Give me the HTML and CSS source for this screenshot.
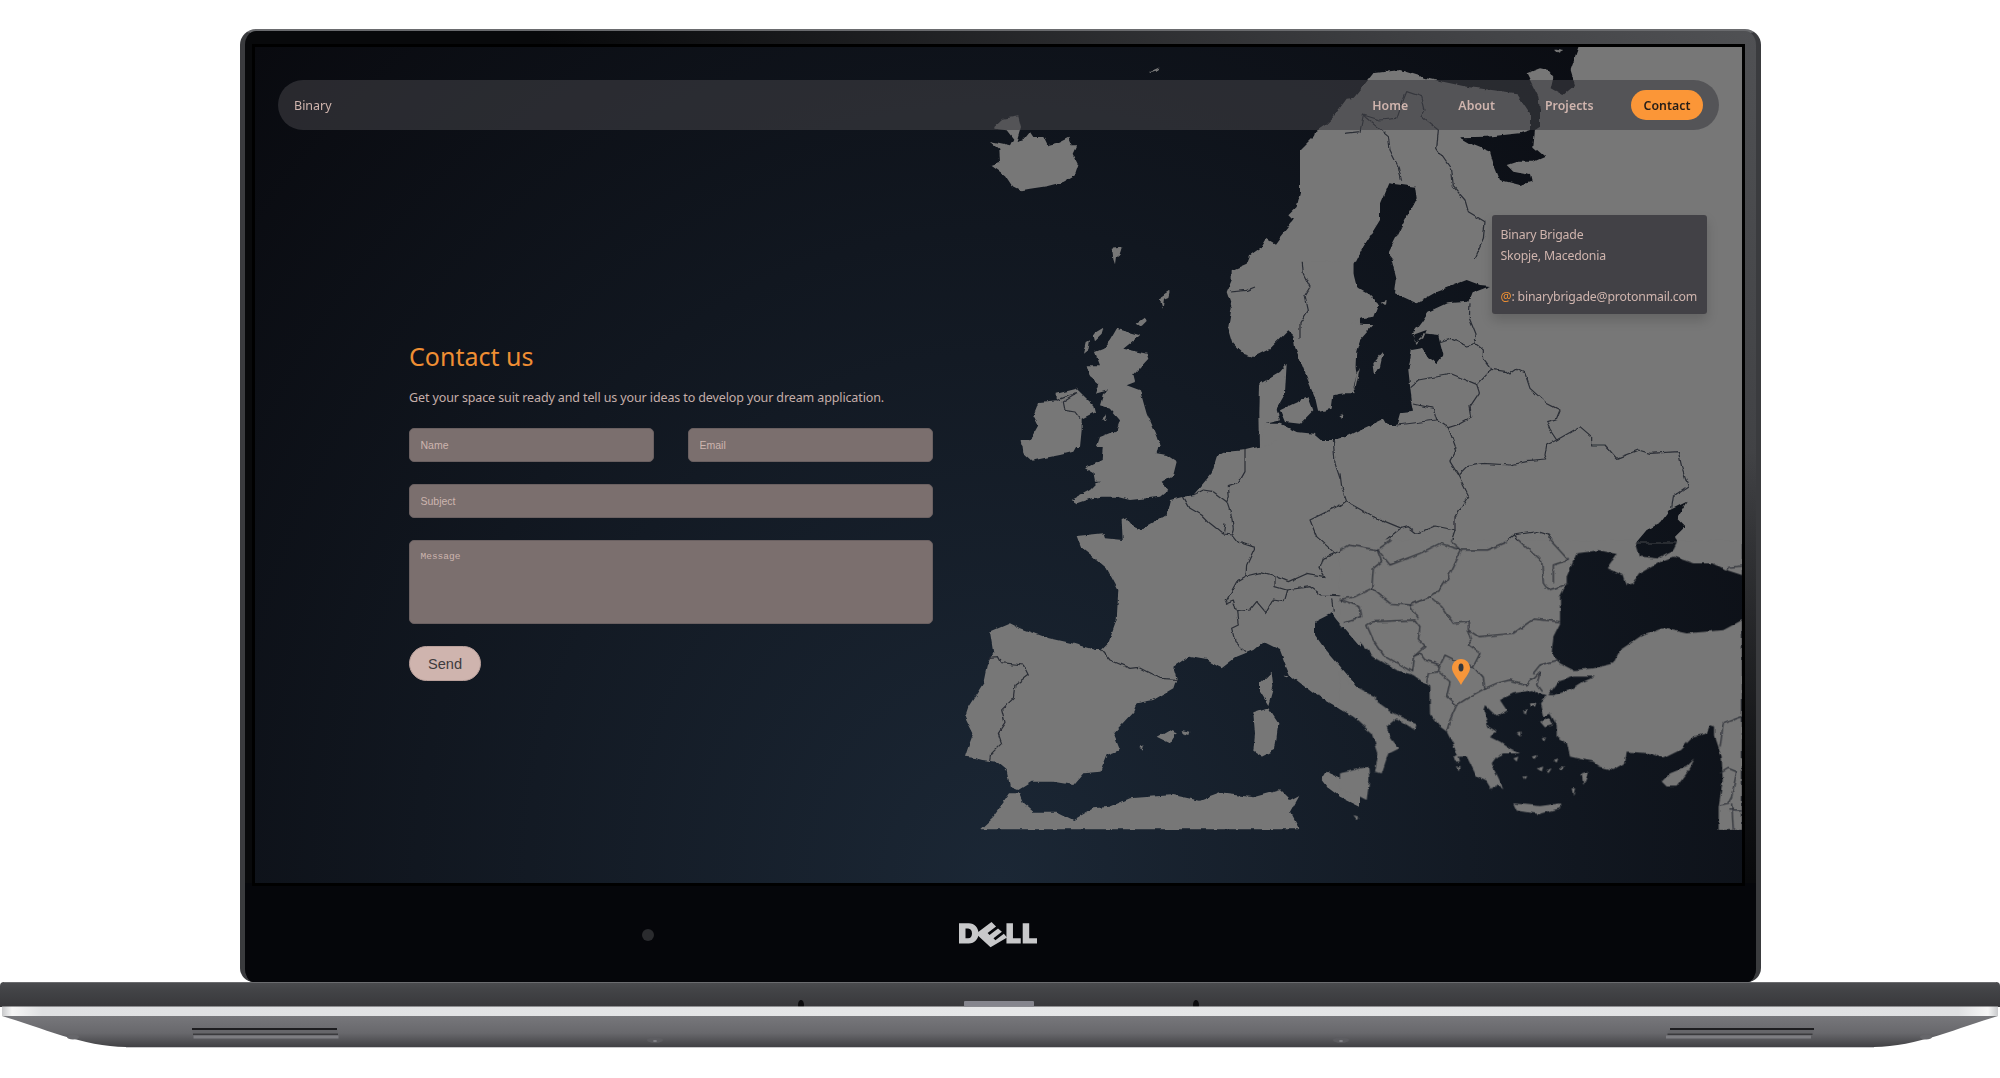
FILE: index.html
```html
<!DOCTYPE html>
<html lang="en">
<head>
<meta charset="utf-8">
<title>Contact us</title>
<link rel="stylesheet" href="styles.css">
</head>
<body>
<div class="lid">
  <div class="screen">
    <svg class="map" viewBox="255 47 1487 836" width="1487" height="836" aria-hidden="true">
      <defs>
        <filter id="rough" x="0" y="0" width="100%" height="100%">
          <feTurbulence type="fractalNoise" baseFrequency=".11" numOctaves="3" seed="4" result="n"/>
          <feDisplacementMap in="SourceGraphic" in2="n" scale="4" xChannelSelector="R" yChannelSelector="G"/>
        </filter>
      </defs>
      <g filter="url(#rough)">
      <g transform="translate(960 47) scale(.33333)">
        <path class="land" d="M570 72 598 60 595 68 575 75Z"/>
        <path class="land" d="M103 240 130 215 175 208 183 240 170 285 190 280 210 255 220 270 250 270 262 295 300 285 325 272 335 295 350 295 338 320 355 355 345 385 310 405 260 418 210 425 185 430 155 415 135 385 92 355 120 345 118 305 90 282 130 290 150 295 160 275 140 250 103 245Z"/>
        <path class="land" d="M455 605 485 602 478 625 468 632 465 655 460 640 458 620Z M630 730 625 750 612 755 608 785 600 760 612 742Z M530 830 555 812 560 825 545 840Z M400 860 430 842 425 860 405 880Z M380 885 390 880 385 910 372 920Z M425 1120 440 1105 435 1122Z"/>
        <path class="land" d="M470 845 540 865 490 905 560 920 565 935 520 985 525 1005 500 1015 540 1030 560 1100 590 1170 600 1200 410 1200 420 1170 470 1150 480 1120 450 1085 420 1075 430 1040 445 1030 405 1040 415 1010 390 990 380 955 420 955 405 915 430 905 450 880Z"/>
        <path class="land" d="M235 1065 290 1060 290 1040 350 1025 400 1075 405 1095 365 1115 365 1150 360 1200 185 1200 215 1170 235 1135 220 1105 230 1080Z"/>
        <path class="land" d="M1200 150 1160 155 1120 210 1095 235 1065 255 1060 280 1035 310 1080 300 1060 350 1035 400 1020 440 1010 480 985 505 1000 520 960 570 945 590 920 575 905 600 870 625 860 650 815 670 815 700 800 735 815 780 805 840 820 890 850 920 880 930 930 905 985 850 1000 865 1005 900 1040 990 1065 1050 1075 1095 1115 1085 1120 1045 1165 1035 1185 1000 1190 880 1200 860 1200 760 1190 750 1180 700 1180 650 1200 620Z"/>
        <path class="land" d="M900 1010 960 975 980 950 975 1040 950 1085 960 1120 915 1130 930 1200 900 1200 898 1100Z M960 1090 1000 1070 1045 1050 1060 1090 1020 1130 975 1125Z M1135 1105 1148 1100 1145 1112Z"/>
        <path class="land" d="M915 1130 960 1130 1010 1155 1060 1160 1095 1190 1140 1175 1200 1200 900 1200Z"/>
        <path class="border" d="M290 1060 330 1045 350 1040 310 1065 315 1090 345 1095 360 1115"/>
        <path class="border" d="M1155 258 1150 290 1120 320 1120 350 1110 380 1085 420 1075 500 1065 520 1078 545 1040 555 1022 590 1030 680 1050 720 1035 745 1045 790 1020 830 1020 875"/>
        <path class="border" d="M810 735 860 730 885 720"/>
      </g>
      <g transform="translate(960 440) scale(.33333)">
        <path class="land" d="M185 0 360 0 340 35 300 45 250 55 215 62 190 40Z"/>
        <path class="land" d="M430 0 600 0 590 40 620 45 650 65 640 105 605 125 625 150 600 170 560 175 510 180 470 170 425 170 395 175 350 190 335 180 390 150 410 130 470 110 430 125 405 125 400 100 375 85 425 60Z"/>
        <path class="land" d="M1200 0 950 0 930 15 900 20 860 30 800 35 770 50 755 100 730 130 700 165 670 170 630 180 620 225 560 260 545 270 520 260 500 235 485 240 488 300 435 295 430 280 350 288 362 320 400 350 440 385 475 450 470 540 445 610 425 630 405 630 330 608 250 590 180 565 150 550 90 575 100 640 80 680 70 730 25 800 15 830 40 880 25 920 15 950 50 955 70 960 110 965 140 990 150 1040 175 1050 215 1025 280 1025 340 1035 370 1000 420 995 440 945 480 930 460 880 520 815 530 790 580 780 640 745 650 715 640 680 685 650 740 660 785 685 830 650 880 630 910 605 960 630 975 670 990 705 1060 760 1130 800 1200 840 1200 750 1150 690 1090 620 1065 585 1065 545 1115 520 1130 540 1200 620Z"/>
        <path class="land" d="M900 730 935 695 940 740 925 795 900 755Z M880 820 925 805 955 850 945 930 905 950 880 935 885 880Z M590 890 625 870 650 880 630 910Z M665 870 688 875 685 885 668 880Z M535 920 550 915 545 935Z M970 708 985 705 980 712Z"/>
        <path class="land" d="M60 1168 100 1130 150 1060 178 1060 190 1090 220 1115 290 1115 340 1140 400 1105 450 1100 510 1075 640 1065 720 1082 780 1060 880 1072 960 1050 990 1080 1018 1065 990 1115 1018 1168Z"/>
        <path class="land" d="M1085 1020 1100 995 1200 1040 1200 1100 1140 1070 1100 1040Z"/>
        <path class="border" d="M425 630 450 660 510 685 535 682 570 700 600 715 650 718"/>
        <path class="border" d="M90 652 115 650 125 668 190 675 205 705 165 735 160 775 125 810 135 850 115 880 125 910 95 940 92 960"/>
        <path class="border" d="M670 170 690 205 725 225 750 250 790 282 815 285 830 305 885 322 860 375 858 408 830 425 795 490"/>
        <path class="border" d="M858 408 900 398 945 410 945 440 980 450 970 485 940 480 918 518 890 485 870 510 830 515 820 480 795 490"/>
        <path class="border" d="M830 515 835 555 815 565 825 605 858 635"/>
        <path class="border" d="M700 165 730 150 760 155 800 185 815 230 820 265 815 285 M795 250 790 282"/>
        <path class="border" d="M855 30 855 95 835 130 805 140 808 170 800 185"/>
        <path class="border" d="M1120 0 1125 70 1145 130 1165 185 1130 200 1050 240 1070 290 1125 340 1170 315 1200 320 M1165 185 1200 205"/>
        <path class="border" d="M1125 340 1090 355 1080 385 1095 410 1040 400 985 425 950 410"/>
        <path class="border" d="M980 450 1050 440 1085 465 1200 470 M1115 475 1120 515 M1150 535 1200 530"/>
      </g>
      <g transform="translate(1300 30) scale(.33333)">
        <path class="land" d="M0 360 60 300 140 230 220 130 300 120 380 145 500 170 650 190 690 250 690 300 660 310 560 320 480 322 520 345 570 365 580 400 600 450 660 465 695 455 690 435 640 425 620 405 650 395 700 395 735 380 700 350 705 300 720 290 720 240 715 200 690 150 680 130 720 115 745 120 760 140 752 175 790 195 825 165 812 120 835 55 835 0 1500 0 1500 695 285 695 265 670 290 620 320 560 350 505 345 470 265 460 240 520 240 570 190 650 168 695 0 695Z"/>
        <path class="land" d="M760 55 790 60 775 68Z"/>
        <path class="border" d="M135 310 180 305 190 255 240 270 290 265 300 235 320 185 365 200 375 240 365 260 415 300 410 355 455 420 460 470 495 510 505 545 555 575 550 625 495 750"/>
        <path class="border" d="M190 255 200 265 265 320 270 360 295 410 305 455"/>
      </g>
      <g transform="translate(1340 260) scale(.33333)">
        <path class="land even" d="M0 0H1300V850H0Z M40 0 155 0 170 60 165 100 230 130 290 95 380 60 420 75 450 78 395 100 385 125 320 130 265 155 245 185 215 225 230 255 250 220 295 225 310 285 290 312 265 295 245 265 215 270 205 330 215 420 222 455 180 460 170 495 140 495 130 478 60 510 20 530 0 535 0 400 40 400 50 340 40 300 60 240 100 195 75 195 30 190 65 175 100 170 115 130 85 100 50 80 40 40Z M100 310 130 275 120 320 105 345Z M60 320 45 390 40 385 50 340Z M218 225 260 210 250 235 225 250Z M125 125 140 120 138 135Z M888 848 920 810 960 790 990 750 1040 725 1010 775 1035 800 1005 830 1012 848Z"/>
        <path class="border" d="M390 130 388 175 408 225 405 250 430 270 430 295 455 328 500 335 510 342 530 328 555 340 570 385 620 430 660 450 650 475 620 485 630 510 650 540 720 500 755 530 755 555 795 555 830 595 895 570 930 580 1015 575 1025 620 1045 680 1000 710 995 745"/>
        <path class="border" d="M300 245 330 235 380 258 405 250 M212 380 235 360 335 342 410 373 445 335 455 328 M410 373 418 398 390 440 395 470 350 495 325 503 M222 432 280 445 290 478 325 503 M170 495 290 480"/>
        <path class="border" d="M325 503 350 570 330 605 352 640 385 705 345 770 345 810 M650 540 620 555 615 585 620 600 560 605 510 615 430 610 380 620 355 645"/>
        <path class="border" d="M0 640 5 680 20 725 100 770 185 805 205 800 230 820 285 798 345 810 330 855 370 872 430 870 490 850 520 825 590 815 625 825 650 860 680 895 M20 725 0 740 M115 860 185 805 M520 825 575 885 600 900"/>
        <path class="border" d="M0 865 30 855 115 860 125 885 190 895 295 855 335 855 365 870"/>
      </g>
      <g transform="translate(1340 540) scale(.33333)">
        <path class="land even" d="M0 0 885 0 900 50 950 55 1000 30 1015 0 1206 0 1206 105 1160 90 1120 70 1060 70 1000 50 960 65 900 100 880 130 860 135 850 105 800 85 830 42 775 30 750 35 710 40 680 110 680 130 660 170 660 250 640 290 635 340 660 370 700 390 760 385 820 370 840 330 900 290 970 265 1040 280 1100 275 1150 270 1206 240 1206 870 1136 870 1136 800 1148 720 1145 650 1125 590 1125 560 1110 555 1100 580 1060 590 1020 630 970 655 930 640 860 635 855 670 820 690 780 680 760 665 735 660 690 650 680 610 650 590 650 555 630 520 610 530 600 490 620 465 590 460 580 450 520 460 480 480 500 510 470 530 435 495 430 510 445 560 470 575 450 590 480 605 510 625 540 640 490 640 470 650 455 670 490 745 470 730 455 750 440 725 410 710 380 650 355 650 345 625 320 575 300 560 270 520 268 440 220 405 170 390 100 350 40 285 15 245 0 265Z M625 465 655 425 700 410 765 410 730 425 690 450 640 465Z"/>
        <path class="land" d="M0 390 30 430 105 470 105 480 160 520 230 550 225 570 170 535 140 560 150 590 175 625 145 640 125 700 105 695 115 640 95 580 40 530 0 505Z M0 700 85 680 88 720 80 780 40 760 0 750Z"/>
        <path class="land" d="M965 725 990 700 1040 680 1065 655 1040 700 1010 740 980 740Z M520 790 600 798 660 790 660 805 595 822 530 812Z M570 490 590 488 585 500 572 498Z M548 512 565 508 560 520Z M530 580 542 578 540 590Z M600 545 630 535 640 555 615 562Z M605 595 618 592 612 605Z M590 685 610 680 605 695Z M520 655 535 650 530 665Z M575 650 590 645 585 660Z M550 710 562 708 556 718Z M640 660 655 655 650 668Z M660 680 672 680 665 690Z M695 745 705 745 700 768Z M725 700 745 695 730 735Z M620 690 635 685 625 700Z M340 650 355 645 360 665 345 665Z M350 680 362 678 360 690Z M40 825 55 830 50 838Z"/>
        <path class="border" d="M0 30 25 15 110 30 155 0 M110 25 125 65 100 85 95 145 45 170 0 178 60 200 65 230 15 245"/>
        <path class="border" d="M95 145 150 190 210 195 270 170 300 150 320 120 365 30 300 10 240 40 150 75 110 25 M330 0 365 30 440 30 500 5"/>
        <path class="border" d="M535 0 605 65 610 130 625 150 660 140 685 130 M630 0 685 60 640 75 640 130"/>
        <path class="border" d="M80 255 100 245 225 240 240 260 235 300 255 320 220 350 215 395 130 345 100 300 80 255 M210 195 235 235"/>
        <path class="border" d="M270 170 305 200 340 250 385 245 385 270 415 290 520 280 580 237 660 245 M385 270 395 300 385 315 420 340 400 380"/>
        <path class="border" d="M220 350 240 340 255 360 300 375 315 345 345 360 400 380 430 415 435 445 390 470 350 495 320 470 330 425 295 395 265 400 260 430 M300 375 295 395 M350 495 330 540 320 575"/>
        <path class="border" d="M435 445 470 430 510 420 560 435 580 415 600 395 590 435 605 455 M580 400 600 375 655 360"/>
        <path class="border" d="M1140 620 1150 550 1206 530 M1140 700 1165 685 1190 695 1175 770 1165 790 1140 795 M1175 790 1180 870 M1165 810 1206 810 M1160 90 1165 82 1206 78"/>
      </g>
      </g>
      <path class="pin" d="M1461 659C1455.500 659 1452 663.500 1452 668C1452 673 1458 679 1461 685C1464 679 1470 673 1470 668C1470 663.500 1466.500 659 1461 659Z"/>
      <ellipse class="pin-hole" cx="1461" cy="667.500" rx="2.500" ry="4"/>
    </svg>

    <nav class="nav">
      <span class="brand">Binary</span>
      <ul class="links">
        <li><a class="link">Home</a></li>
        <li><a class="link">About</a></li>
        <li><a class="link">Projects</a></li>
        <li><a class="link active">Contact</a></li>
      </ul>
    </nav>

    <aside class="info">
      <p>Binary Brigade</p>
      <p>Skopje, Macedonia</p>
      <p>&nbsp;</p>
      <p><span class="at">@</span>: binarybrigade@protonmail.com</p>
    </aside>

    <form class="form">
      <h1 class="title">Contact us</h1>
      <p class="lead">Get your space suit ready and tell us your ideas to develop your dream application.</p>
      <div class="row">
        <input class="field" type="text" placeholder="Name">
        <input class="field" type="text" placeholder="Email">
      </div>
      <input class="field" type="text" placeholder="Subject">
      <textarea class="field message" placeholder="Message"></textarea>
      <button class="send" type="button">Send</button>
    </form>
  </div>

  <div class="chin">
    <span class="camera"></span>
    <svg class="logo" viewBox="40 20 240 80" width="80" height="26" aria-label="Dell logo" role="img">
      <path class="logo-ink" fill-rule="evenodd" d="M40 24H70C88 24 100 38 100 55C100 72 88 86 70 86H40ZM60 40V70H68C76 70 80 63 80 55C80 47 76 40 68 40Z"/>
      <path class="logo-ink" d="M92 56 140 20 154 34 128 54 134 60 160 40 172 50 146 70 152 76 178 56 188 68 137 98Z"/>
      <path class="logo-ink" d="M186 24H206V70H230V86H186Z"/>
      <path class="logo-ink" d="M236 24H256V70H280V86H236Z"/>
    </svg>
  </div>
</div>

<svg class="base" viewBox="0 982 2000 66" width="2000" height="66" aria-hidden="true">
  <defs>
    <linearGradient id="band" x1="0" y1="0" x2="0" y2="1">
      <stop offset="0" stop-color="#4b4c4f"/>
      <stop offset=".3" stop-color="#434447"/>
      <stop offset="1" stop-color="#38383b"/>
    </linearGradient>
    <linearGradient id="strip" x1="0" y1="0" x2="1" y2="0">
      <stop offset="0" stop-color="#c8c9cb"/>
      <stop offset=".005" stop-color="#f6f6f6"/>
      <stop offset=".02" stop-color="#dfe0e2"/>
      <stop offset=".5" stop-color="#e6e7e8"/>
      <stop offset=".98" stop-color="#dfe0e2"/>
      <stop offset=".995" stop-color="#f6f6f6"/>
      <stop offset="1" stop-color="#c8c9cb"/>
    </linearGradient>
    <linearGradient id="lower" x1="0" y1="0" x2="0" y2="1">
      <stop offset="0" stop-color="#77777b"/>
      <stop offset=".55" stop-color="#68686c"/>
      <stop offset="1" stop-color="#414144"/>
    </linearGradient>
  </defs>
  <path fill="url(#band)" d="M0 986Q0 982 4 982H1996Q2000 982 2000 986V1007H0Z"/>
  <rect class="base-top" x="4" y="982" width="1992" height="1"/>
  <path fill="url(#lower)" d="M2 1016H1998C1960 1027 1916 1047 1874 1047H126C84 1047 40 1027 2 1016Z"/>
  <ellipse class="hole" cx="801" cy="1005" rx="3" ry="5"/>
  <ellipse class="hole" cx="1196" cy="1005" rx="3" ry="5"/>
  <rect fill="url(#strip)" x="2" y="1006.500" width="1996" height="9.500"/>
  <rect class="base-edge" x="126" y="1047" width="1748" height="1"/>
  <rect class="notch" x="964" y="1001" width="70" height="5.500" rx="1"/>
  <rect class="slot-dark" x="192" y="1028" width="145" height="2"/>
  <rect class="slot-mid" x="192.500" y="1030" width="145" height="3.500"/>
  <rect class="slot-dark-soft" x="193" y="1033.500" width="145" height="1.500"/>
  <rect class="slot-light" x="193.500" y="1035.500" width="145" height="3"/>
  <rect class="slot-dark" x="1670" y="1028" width="144" height="2"/>
  <rect class="slot-mid" x="1668.500" y="1030" width="145" height="3.500"/>
  <rect class="slot-dark-soft" x="1667.500" y="1033.500" width="145" height="1.500"/>
  <rect class="slot-light" x="1666" y="1035.500" width="145" height="3"/>
  <ellipse class="dome" cx="655" cy="1040" rx="8" ry="3"/>
  <ellipse class="dome-dot" cx="655" cy="1041" rx="2" ry="1"/>
  <ellipse class="dome" cx="1341" cy="1040" rx="8" ry="3"/>
  <ellipse class="dome-dot" cx="1341" cy="1041" rx="2" ry="1"/>
  <ellipse class="dome faint" cx="73" cy="1037" rx="6" ry="2.500"/>
  <ellipse class="dome faint" cx="1926" cy="1037" rx="6" ry="2.500"/>
</svg>
</body>
</html>
```
FILE: styles.css
```css
* { box-sizing: border-box; }
html, body { margin: 0; }
body {
  background: #fff;
  padding-top: 29px;
  font-family: "Noto Sans", "Open Sans", sans-serif;
  color: #d0b5ae;
  overflow: hidden;
}
p, h1, ul { margin: 0; padding: 0; }
.lid {
  width: 1521px;
  height: 953px;
  margin-left: 240px;
  border: solid #3a3b3e;
  border-width: 2px 5px 0;
  border-top-color: #6a6b6e;
  border-radius: 16px 16px 14px 14px;
  padding: 16px 14px 0 10px;
  background:
    linear-gradient(to bottom, rgba(8, 9, 11, 0) 420px, #08090b 850px),
    linear-gradient(235deg, #505154 0, #3f4043 280px, #08090b 1000px);
  overflow: hidden;
}
.screen {
  position: relative;
  z-index: 1;
  width: 1487px;
  height: 836px;
  box-shadow: 0 0 0 3px #000;
  background: radial-gradient(ellipse at bottom, #1b2735 0%, #090a0f 100%);
  display: flex;
  flex-direction: column;
}
.map { position: absolute; inset: 0; display: block; overflow: hidden; }
.land { fill: #777; }
.even { fill-rule: evenodd; }
.border {
  fill: none;
  stroke: #2b2e36;
  stroke-width: 1.2;
  stroke-linejoin: round;
  vector-effect: non-scaling-stroke;
}
.pin { fill: #f7963a; }
.pin-hole { fill: #34373c; }

.nav {
  position: relative;
  display: flex;
  align-items: center;
  justify-content: space-between;
  height: 50px;
  margin: 33px 23px 0;
  padding: 0 16px;
  border-radius: 25px;
  background: rgba(62, 62, 66, .6);
  font-size: 12.500px;
}
.links { display: flex; gap: 25px; list-style: none; }
.link {
  display: block;
  padding: 7px 12.500px 5px;
  height: 30px;
  line-height: 18px;
  font-size: 12.300px;
  font-weight: 600;
  letter-spacing: .05px;
  border-radius: 15px;
}
.active { background: #fb9637; color: #241d18; }

.info {
  position: absolute;
  top: 168px;
  right: 35px;
  width: 215px;
  height: 99px;
  padding: 10px 8.500px;
  border-radius: 3px;
  background: #424146;
  box-shadow: 0 6px 12px rgba(0, 0, 0, .16);
  font-size: 12.300px;
  letter-spacing: -.18px;
  line-height: 20.500px;
  white-space: nowrap;
}
.at { color: #ee8f33; }

.form {
  position: relative;
  width: 524px;
  margin: 210px 0 0 154px;
  display: flex;
  flex-direction: column;
}
.title {
  font-size: 25px;
  line-height: 32px;
  font-weight: 400;
  color: #ef8e33;
}
.lead {
  margin-top: 16px;
  font-size: 12.500px;
  letter-spacing: -.12px;
  line-height: 20px;
  color: #c5aea9;
}
.row { display: flex; justify-content: space-between; margin-top: 20px; }
.row .field { width: 245px; margin: 0; }
.field {
  display: block;
  width: 100%;
  height: 34px;
  margin-top: 22px;
  padding: 0 10.500px;
  border: 1px solid #6a6061;
  border-radius: 5px;
  background: #7b6f6e;
  font-family: "Liberation Sans", Arial, sans-serif;
  font-size: 10.500px;
  color: #d0b5ae;
  outline: none;
}
.field::placeholder { color: #cdb5af; opacity: 1; }
.message {
  height: 84px;
  padding: 10px 10.500px;
  font-family: "Liberation Mono", monospace;
  font-size: 9.500px;
  resize: none;
}
.send {
  align-self: flex-start;
  width: 72px;
  height: 35px;
  margin-top: 22px;
  padding: 0;
  border: 1px solid #b9a09b;
  border-radius: 18px;
  background: #cfb4ae;
  font-family: "Liberation Sans", Arial, sans-serif;
  font-size: 14.600px;
  color: #3e3b3d;
}

.chin {
  display: flex;
  align-items: center;
  gap: 304px;
  height: 99px;
  margin: 0 -14px 0 -10px;
  padding: 4px 0 0 391px;
  background: #05060a;
}
.camera {
  width: 12px;
  height: 12px;
  margin-left: 6px;
  border-radius: 50%;
  background: #2a2b2e;
}
.logo { display: block; flex: none; }
.logo-ink { fill: #c8c8ca; }

.base { display: block; }
.base-top { fill: #6b6c6f; }
.base-edge { fill: #c9c9cb; }
.notch { fill: #85858d; }
.hole { fill: #0b0b0d; }
.slot-dark { fill: #1d1d20; }
.slot-mid { fill: #66666a; }
.slot-dark-soft { fill: #3a3a3d; }
.slot-light { fill: #7d7d81; }
.dome { fill: #5c5c60; }
.dome-dot { fill: #85858a; }
.faint { fill: #66666a; }
```
